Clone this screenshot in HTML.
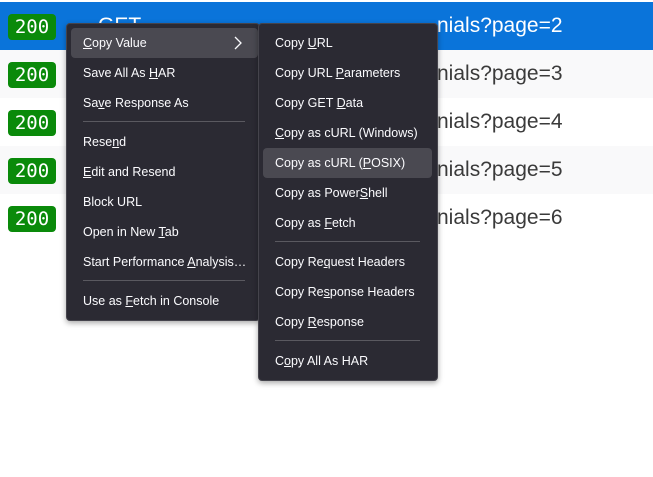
<!DOCTYPE html>
<html><head><style>
body{margin:0;width:653px;height:477px;overflow:hidden;background:#fff;position:relative;font-family:"Liberation Sans",sans-serif}
.row{position:absolute;left:0;width:653px;height:48px}
.b{position:absolute;left:8px;width:48px;height:26px;background:#0a8a0a;border-radius:4px;color:#fff;font:19px "DejaVu Sans Mono",monospace;text-align:center;line-height:26px}
.u{position:absolute;left:437px;font-size:21px;color:#3a3a3a;line-height:48px;top:0}
.m{position:absolute;background:#2b2a33;border:1px solid #45444c;border-radius:4px;box-shadow:0 2px 6px rgba(0,0,0,.35)}
.i{position:absolute;color:#fbfbfe;font-size:12.5px;line-height:30px;height:30px;white-space:nowrap}
.s{position:absolute;height:1px;background:#5a5960}
.h{position:absolute;background:#4a4951;border-radius:4px}
</style></head><body>
<div class="row" style="top:2px;background:#0a74da"><div class="b" style="top:12px">200</div><div class="u" style="color:#fff">nials?page=2</div><div style="position:absolute;left:98px;top:0;color:#fff;font-size:21px;line-height:48px">GET</div></div>
<div class="row" style="top:50px;background:#f9f9fa"><div class="b" style="top:12px">200</div><div class="u">nials?page=3</div></div>
<div class="row" style="top:98px;background:#fff"><div class="b" style="top:12px">200</div><div class="u">nials?page=4</div></div>
<div class="row" style="top:146px;background:#f9f9fa"><div class="b" style="top:12px">200</div><div class="u">nials?page=5</div></div>
<div class="row" style="top:194px;background:#fff"><div class="b" style="top:12px">200</div><div class="u">nials?page=6</div></div>

<div class="m" style="left:66px;top:23px;width:192px;height:296px"></div>
<div class="h" style="left:71px;top:28px;width:187px;height:30px"></div>
<div class="i" style="left:83px;top:28px"><u>C</u>opy Value</div>
<svg style="position:absolute;left:233px;top:36px" width="10" height="14"><path d="M2 1 L8 7 L2 13" stroke="#fbfbfe" stroke-width="1.3" fill="none"/></svg>
<div class="i" style="left:83px;top:58px">Save All As <u>H</u>AR</div>
<div class="i" style="left:83px;top:88px">Sa<u>v</u>e Response As</div>
<div class="s" style="left:83px;top:121px;width:162px"></div>
<div class="i" style="left:83px;top:127px">Rese<u>n</u>d</div>
<div class="i" style="left:83px;top:157px"><u>E</u>dit and Resend</div>
<div class="i" style="left:83px;top:187px">Block URL</div>
<div class="i" style="left:83px;top:217px">Open in New <u>T</u>ab</div>
<div class="i" style="left:83px;top:247px">Start Performance <u>A</u>nalysis…</div>
<div class="s" style="left:83px;top:280px;width:162px"></div>
<div class="i" style="left:83px;top:286px">Use as <u>F</u>etch in Console</div>

<div class="m" style="left:258px;top:23px;width:178px;height:356px"></div>
<div class="h" style="left:263px;top:148px;width:169px;height:30px"></div>
<div class="i" style="left:275px;top:28px">Copy <u>U</u>RL</div>
<div class="i" style="left:275px;top:58px">Copy URL <u>P</u>arameters</div>
<div class="i" style="left:275px;top:88px">Copy GET <u>D</u>ata</div>
<div class="i" style="left:275px;top:118px"><u>C</u>opy as cURL (Windows)</div>
<div class="i" style="left:275px;top:148px">Copy as cURL (<u>P</u>OSIX)</div>
<div class="i" style="left:275px;top:178px">Copy as Power<u>S</u>hell</div>
<div class="i" style="left:275px;top:208px">Copy as <u>F</u>etch</div>
<div class="s" style="left:275px;top:241px;width:145px"></div>
<div class="i" style="left:275px;top:247px">Copy Re<u>q</u>uest Headers</div>
<div class="i" style="left:275px;top:277px">Copy Re<u>s</u>ponse Headers</div>
<div class="i" style="left:275px;top:307px">Copy <u>R</u>esponse</div>
<div class="s" style="left:275px;top:340px;width:145px"></div>
<div class="i" style="left:275px;top:346px">C<u>o</u>py All As HAR</div>
</body></html>
